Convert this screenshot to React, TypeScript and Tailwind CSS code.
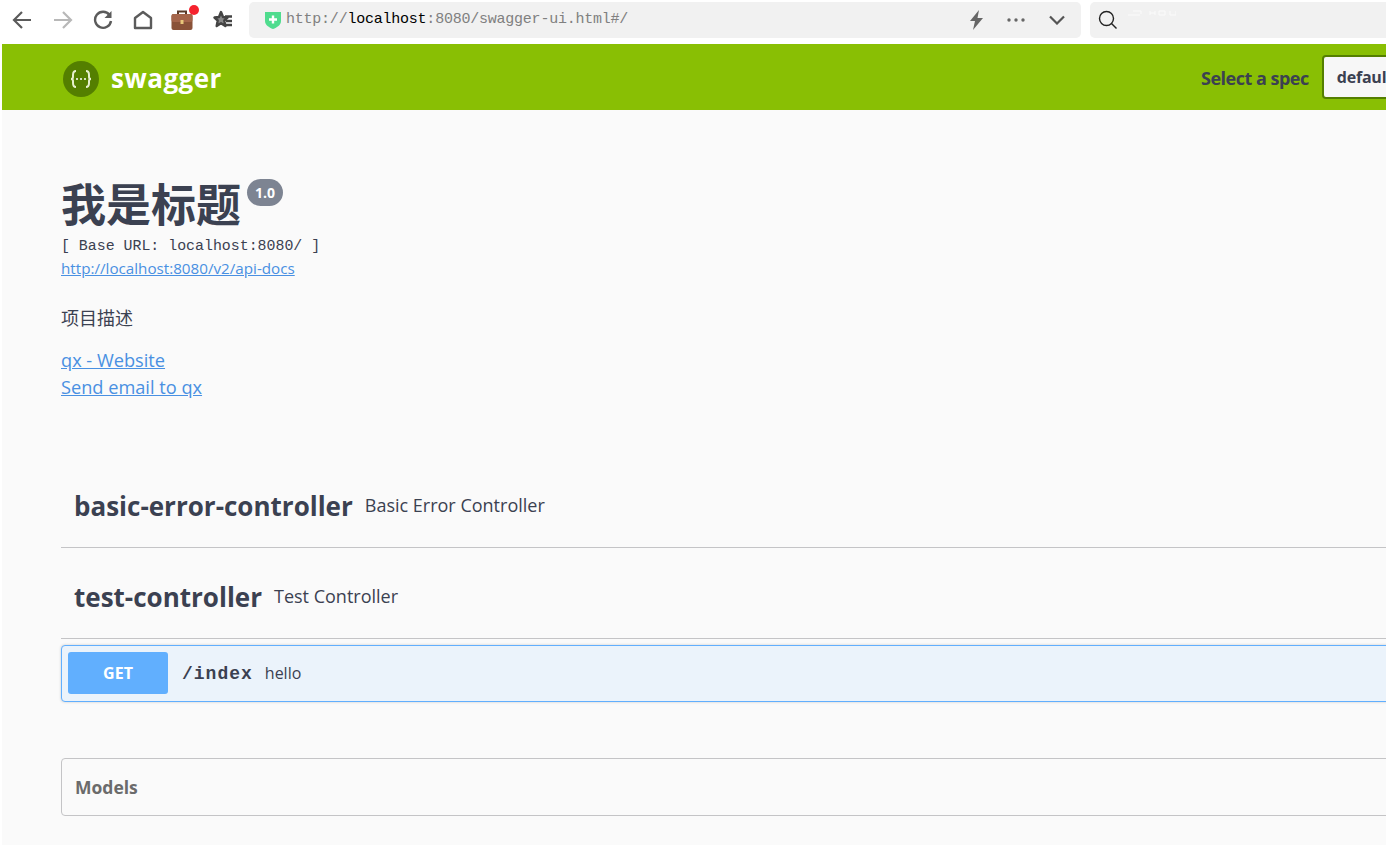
const sans = "font-['Open_Sans','Noto_Sans_CJK_SC',sans-serif]"

function Back() {
  return (
    <svg width="20" height="20" viewBox="0 0 20 20" fill="none" stroke="#5b5b5b" strokeWidth="2.200">
      <path d="M19 10H2M10 2l-8 8 8 8" />
    </svg>
  )
}

function Forward() {
  return (
    <svg width="20" height="20" viewBox="0 0 20 20" fill="none" stroke="#b8b8b8" strokeWidth="2.200">
      <path d="M1 10h17M10 2l8 8-8 8" />
    </svg>
  )
}

function Reload() {
  return (
    <svg width="20" height="20" viewBox="0 0 20 20" fill="none" stroke="#5b5b5b" strokeWidth="2.400">
      <path d="M16.500 5A8 8 0 1 0 18 11" />
      <path d="M18.500 1v7h-7z" fill="#5b5b5b" stroke="none" />
    </svg>
  )
}

function Home() {
  return (
    <svg width="20" height="20" viewBox="0 0 20 20" fill="none" stroke="#5b5b5b" strokeWidth="2.400" strokeLinejoin="round">
      <path d="M2 8L10 2l8 6v10H2z" />
    </svg>
  )
}

function Briefcase() {
  return (
    <div className="relative w-[24px] h-[24px]">
      <svg width="22" height="22" viewBox="0 0 22 22" className="absolute left-0 top-[1px]">
        <path d="M7 5V2.500h8V5" fill="none" stroke="#5a3a28" strokeWidth="2" />
        <rect x="0.5" y="5" width="21" height="16" rx="2" fill="#8a5238" />
        <rect x="0.5" y="5" width="21" height="8" rx="2" fill="#a5654a" />
        <rect x="9.5" y="11" width="3" height="4" fill="#e8c67a" />
      </svg>
      <div className="absolute left-[18px] top-[-3px] w-[10px] h-[10px] rounded-full bg-[#f5222d]" />
    </div>
  )
}

function StarList() {
  return (
    <svg width="20" height="20" viewBox="0 0 20 20" fill="none" stroke="#444" strokeWidth="2.400">
      <path d="M8 2l2 5 4.500.5-3.200 3 1 5.500L8 13.200 3.700 16l1-5.500L1.500 7.500 6 7z" fill="#8a8a8a" strokeLinejoin="round" />
      <path d="M12 6.500h7M13 11h6M13 15h6" />
    </svg>
  )
}

function Shield() {
  return (
    <svg width="18" height="20" viewBox="0 0 18 20">
      <path d="M1 2h16v9c0 4-4 6.500-8 8-4-1.500-8-4-8-8z" fill="#4fdc8e" />
      <path d="M9 5.500v8M5 9.500h8" stroke="#fff" strokeWidth="2.400" />
    </svg>
  )
}

function Bolt() {
  return (
    <svg width="16" height="20" viewBox="0 0 16 20">
      <path d="M10 0L1 11h5l-2 9 10-12H8.500z" fill="#666" />
    </svg>
  )
}

function Chevron() {
  return (
    <svg width="16" height="10" viewBox="0 0 16 10" fill="none" stroke="#555" strokeWidth="2.200">
      <path d="M1 1.500l7 7 7-7" />
    </svg>
  )
}

function Search() {
  return (
    <svg width="20" height="20" viewBox="0 0 20 20" fill="none" stroke="#222" strokeWidth="1.400">
      <circle cx="8.500" cy="8.500" r="7" />
      <path d="M13.500 13.500l5 5" />
    </svg>
  )
}

function Toolbar() {
  return (
    <div className="flex h-[44px] bg-white">
      <div className="flex w-[249px] shrink-0 items-center pl-[12px]">
        <div className="flex w-[41px] -mt-[4px]"><Back /></div>
        <div className="flex w-[40px] -mt-[4px]"><Forward /></div>
        <div className="flex w-[40px] -mt-[4px]"><Reload /></div>
        <div className="flex w-[38px] -mt-[4px]"><Home /></div>
        <div className="flex w-[42px] -mt-[4px]"><Briefcase /></div>
        <div className="flex -mt-[4px]"><StarList /></div>
      </div>
      <div className="flex items-center mt-[2px] h-[36px] w-[832px] rounded-[5px] bg-[#f1f1f1] pl-[15px] pr-[16px]">
        <Shield />
        <span className="ml-[4px] font-['Liberation_Mono',monospace] text-[15px] tracking-[-0.23px] text-[#808080]">
          http://<span className="text-black">localhost</span>:8080/swagger-ui.html#/
        </span>
        <div className="ml-auto flex items-center">
          <div className="-ml-[2px]"><Bolt /></div>
          <svg width="18" height="4" viewBox="0 0 18 4" fill="#666" className="ml-[22px]">
            <circle cx="2" cy="2" r="1.700" />
            <circle cx="9" cy="2" r="1.700" />
            <circle cx="16" cy="2" r="1.700" />
          </svg>
          <div className="ml-[24px]"><Chevron /></div>
        </div>
      </div>
      <div className="flex items-center ml-[9px] mt-[2px] h-[36px] flex-1 rounded-l-[5px] bg-[#f1f1f1] pl-[8px]">
        <Search />
        <svg width="48" height="6" viewBox="0 0 48 6" fill="none" stroke="#fbfbfb" className="ml-[10px] -mt-[14px]">
          <path d="M0 5h12M5 1h8v3M22 1v4M27 1v4M22 3h5M31 1h6v4h-6zM42 1v4h6V1" />
        </svg>
      </div>
    </div>
  )
}

function Logo() {
  return (
    <svg width="36" height="36" viewBox="0 0 36 36">
      <circle cx="18" cy="18" r="18" fill="#547f00" />
      <path
        d="M13 10c-3 0-3 2-3 4v2c0 1.500-1 2-2 2 1 0 2 .5 2 2v2c0 2 0 4 3 4M23 10c3 0 3 2 3 4v2c0 1.500 1 2 2 2-1 0-2 .5-2 2v2c0 2 0 4-3 4"
        fill="none"
        stroke="#e6f0cc"
        strokeWidth="2"
      />
      <circle cx="14" cy="18" r="1" fill="#fff" />
      <circle cx="18" cy="18" r="1" fill="#fff" />
      <circle cx="22" cy="18" r="1" fill="#fff" />
    </svg>
  )
}

function TopBar() {
  return (
    <div className="flex h-[66px] w-[1500px] items-center bg-[#89bf04] pl-[61px]">
      <div className="mt-[4px] flex w-[160px] items-center">
        <Logo />
        <span className={`ml-[12px] -mt-[2px] text-[26px] font-bold tracking-[0.5px] text-white ${sans}`}>swagger</span>
      </div>
      <span className={`ml-[978px] mt-[2px] text-[18px] font-bold tracking-[-0.5px] text-[#3b4151] ${sans}`}>Select a spec</span>
      <div className={`ml-[13px] flex h-[44px] w-[160px] items-center rounded-[4px] border-2 border-[#547f00] bg-[#f7f7f7] pl-[13px] text-[16px] font-bold tracking-[-0.2px] text-[#3b4151] ${sans}`}>
        default
      </div>
    </div>
  )
}

function TagRow({ name, desc }: { name: string; desc: string }) {
  return (
    <div className="flex h-[91px] items-center border-b border-[#c4c4c6] pl-[13px] pt-[8px]">
      <span className={`text-[26px] font-bold text-[#3b4151] ${sans}`}>{name}</span>
      <span className={`ml-[12px] -mt-[2px] text-[18px] text-[#3b4151] ${sans}`}>{desc}</span>
    </div>
  )
}

function Info() {
  return (
    <div className={`text-[#3b4151] ${sans}`}>
      <div className="flex items-start pt-[67px]">
        <h1 className="text-[45px] font-bold leading-[56px]">我是标题</h1>
        <span className="ml-[6px] mt-[2px] flex h-[27px] w-[36px] items-center justify-center rounded-full bg-[#7d8492] text-[14px] font-bold text-white">
          1.0
        </span>
      </div>
      <div className="mt-[5px] font-['Liberation_Mono',monospace] text-[14.900px] leading-[16px]">[ Base URL: localhost:8080/ ]</div>
      <a className="mt-[5px] block text-[15.200px] leading-[18px] text-[#4990e2] underline">http://localhost:8080/v2/api-docs</a>
      <p className="mt-[29px] text-[18px] leading-[24px]">项目描述</p>
      <a className="mt-[17px] block text-[18.200px] leading-[27px] text-[#4990e2] underline">qx - Website</a>
      <a className="block text-[18.200px] leading-[27px] text-[#4990e2] underline">Send email to qx</a>
    </div>
  )
}

export default function App() {
  return (
    <div className="h-[845px] w-[1386px] overflow-hidden bg-white">
      <Toolbar />
      <div className="ml-[2px] h-[801px] bg-[#fafafa]">
        <TopBar />
        <div className="w-[1500px] pl-[59px]">
          <Info />
          <div className="mt-[56px]">
            <TagRow name="basic-error-controller" desc="Basic Error Controller" />
            <TagRow name="test-controller" desc="Test Controller" />
          </div>
          <div className="mt-[6px] flex h-[57px] items-center rounded-[4px] border border-[#61affe] bg-[#ebf3fb] pl-[6px] shadow-[0_0_3px_rgba(0,0,0,0.19)]">
            <div className={`-mt-[1px] flex h-[42px] w-[100px] items-center justify-center rounded-[3px] bg-[#61affe] text-[16px] font-bold text-white ${sans}`}>
              GET
            </div>
            <span className="ml-[14px] mt-[2px] font-['Liberation_Mono',monospace] text-[18px] font-bold tracking-[1px] text-[#3b4151]">/index</span>
            <span className={`ml-[12px] -mt-[1px] text-[16px] text-[#3b4151] ${sans}`}>hello</span>
          </div>
          <div className={`mt-[56px] flex h-[58px] items-center rounded-[4px] border border-[#c4c4c6] pl-[13px] text-[17.500px] font-bold text-[#6b6b6b] ${sans}`}>
            Models
          </div>
        </div>
      </div>
    </div>
  )
}
